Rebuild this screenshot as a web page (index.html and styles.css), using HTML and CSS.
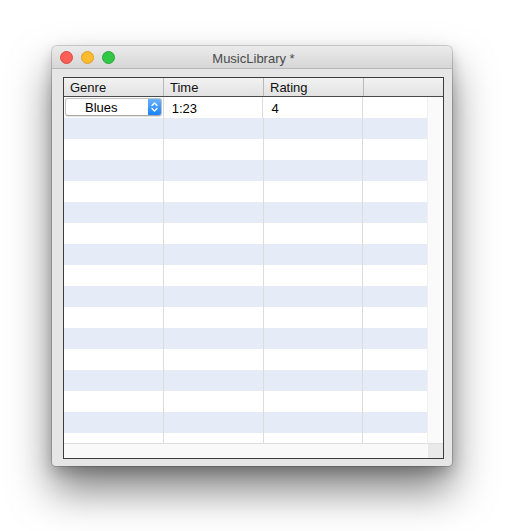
FILE: index.html
```html
<!DOCTYPE html>
<html>
<head>
<meta charset="utf-8">
<link rel="stylesheet" href="styles.css">
</head>
<body>
<div class="window">
  <div class="titlebar">
    <div class="lights">
      <span class="light red"></span>
      <span class="light yellow"></span>
      <span class="light green"></span>
    </div>
    <div class="title">MusicLibrary *</div>
  </div>
  <div class="content">
    <div class="table">
      <div class="header">
        <div class="hcell">Genre</div>
        <div class="hcell">Time</div>
        <div class="hcell">Rating</div>
        <div class="hcell last"></div>
      </div>
      <div class="body">
        <div class="rows">
          <div class="row">
            <div class="cell popcell">
              <div class="popup">
                <span class="poptext">Blues</span>
                <span class="popbtn">
                  <svg width="13" height="18" viewBox="0 0 13 18"><path d="M4 7.5 L6.5 5 L9 7.5 M4 10.5 L6.5 13 L9 10.5" fill="none" stroke="#fff" stroke-width="1.3" stroke-linecap="round" stroke-linejoin="round"/></svg>
                </span>
              </div>
            </div>
            <div class="cell">1:23</div>
            <div class="cell">4</div>
            <div class="cell last"></div>
          </div>
          <div class="row alt"><div class="cell"></div><div class="cell"></div><div class="cell"></div><div class="cell last"></div></div>
          <div class="row"><div class="cell"></div><div class="cell"></div><div class="cell"></div><div class="cell last"></div></div>
          <div class="row alt"><div class="cell"></div><div class="cell"></div><div class="cell"></div><div class="cell last"></div></div>
          <div class="row"><div class="cell"></div><div class="cell"></div><div class="cell"></div><div class="cell last"></div></div>
          <div class="row alt"><div class="cell"></div><div class="cell"></div><div class="cell"></div><div class="cell last"></div></div>
          <div class="row"><div class="cell"></div><div class="cell"></div><div class="cell"></div><div class="cell last"></div></div>
          <div class="row alt"><div class="cell"></div><div class="cell"></div><div class="cell"></div><div class="cell last"></div></div>
          <div class="row"><div class="cell"></div><div class="cell"></div><div class="cell"></div><div class="cell last"></div></div>
          <div class="row alt"><div class="cell"></div><div class="cell"></div><div class="cell"></div><div class="cell last"></div></div>
          <div class="row"><div class="cell"></div><div class="cell"></div><div class="cell"></div><div class="cell last"></div></div>
          <div class="row alt"><div class="cell"></div><div class="cell"></div><div class="cell"></div><div class="cell last"></div></div>
          <div class="row"><div class="cell"></div><div class="cell"></div><div class="cell"></div><div class="cell last"></div></div>
          <div class="row alt"><div class="cell"></div><div class="cell"></div><div class="cell"></div><div class="cell last"></div></div>
          <div class="row"><div class="cell"></div><div class="cell"></div><div class="cell"></div><div class="cell last"></div></div>
          <div class="row alt"><div class="cell"></div><div class="cell"></div><div class="cell"></div><div class="cell last"></div></div>
          <div class="row partial"><div class="cell"></div><div class="cell"></div><div class="cell"></div><div class="cell last"></div></div>
        </div>
        <div class="vscroll"></div>
      </div>
      <div class="hscroll">
        <div class="htrack"></div>
        <div class="corner"></div>
      </div>
    </div>
  </div>
</div>
</body>
</html>
```

FILE: styles.css
```css
html, body {
  margin: 0;
  padding: 0;
  background: #ffffff;
}
html { height: 100%; }
body {
  font-family: "Liberation Sans", Arial, sans-serif;
  font-size: 13px;
  color: #000;
  padding: 46px 0 0 52px;
  min-height: 531px;
  box-sizing: border-box;
}
.window {
  width: 400px;
  height: 420px;
  background: #e6e6e6;
  border-radius: 5px 5px 4px 4px;
  box-shadow: 0 0 0 1px rgba(0,0,0,0.16), 0 24px 42px rgba(0,0,0,0.5), 0 6px 14px rgba(0,0,0,0.2);
  display: flex;
  flex-direction: column;
  overflow: hidden;
}
.titlebar {
  height: 22px;
  border-bottom: 1px solid #b8b8b8;
  background: linear-gradient(#ebebeb, #d6d6d6);
  display: flex;
  align-items: center;
  position: relative;
}
.lights {
  display: flex;
  gap: 8px;
  padding-left: 8px;
}
.light {
  width: 11px;
  height: 11px;
  border-radius: 50%;
  display: block;
}
.red { background: #fc5f57; border: 0.5px solid #df4640; }
.yellow { background: #fdbc2e; border: 0.5px solid #de9e24; }
.green { background: #33c748; border: 0.5px solid #26a934; }
.title {
  flex: 1;
  text-align: center;
  color: #4a4a4a;
  font-size: 13px;
  margin-left: -60px;
  padding-top: 2px;
}
.content {
  padding: 8px 8px 0 11px;
}
.table {
  width: 379px;
  height: 380px;
  border: 1px solid #3c3c3c;
  background: #fff;
  display: flex;
  flex-direction: column;
}
.header {
  height: 18px;
  border-bottom: 1px solid #4a4a4a;
  background: linear-gradient(#f2f2f2, #e2e2e2);
  display: flex;
}
.hcell {
  width: 93px;
  padding-left: 6px;
  border-right: 1px solid #b9b9b9;
  line-height: 20px;
  color: #111;
}
.hcell.last {
  width: 79px;
  padding-left: 0;
  border-right: none;
}
.body {
  height: 346px;
  display: flex;
  border-bottom: 1px solid #dedede;
}
.rows {
  width: 364px;
  overflow: hidden;
}
.row {
  height: 21px;
  display: flex;
}
.row.alt { background: #e6ecf7; }
.row.partial { height: 10px; }
.cell {
  width: 91px;
  padding-left: 8px;
  border-right: 1px solid #dcdcdc;
  line-height: 23px;
}
.cell.last {
  width: 64px;
  padding-left: 0;
  border-right: none;
}
.cell.popcell {
  padding-left: 1px;
  width: 98px;
  display: flex;
  align-items: flex-start;
  padding-top: 1px;
}
.popup {
  width: 95px;
  height: 16px;
  border: 1px solid #c2c2c2;
  border-bottom-color: #a9a9a9;
  border-radius: 3px;
  background: #fff;
  display: flex;
  box-shadow: 0 0.5px 1px rgba(0,0,0,0.12);
  overflow: hidden;
}
.poptext {
  flex: 1;
  padding-left: 19px;
  line-height: 17px;
  color: #000;
}
.popbtn {
  width: 13px;
  background: linear-gradient(#6ab2fb, #1a82fb);
  display: flex;
  align-items: center;
  justify-content: center;
}
.popbtn svg { display: block; margin-top: -1px; }
.vscroll {
  width: 15px;
  background: #fafafa;
  border-left: 1px solid #f0f0f0;
}
.hscroll {
  flex: 1;
  display: flex;
}
.htrack {
  width: 364px;
  background: #f9f9f9;
}
.corner {
  flex: 1;
  background: #e9e9e9;
}
```
